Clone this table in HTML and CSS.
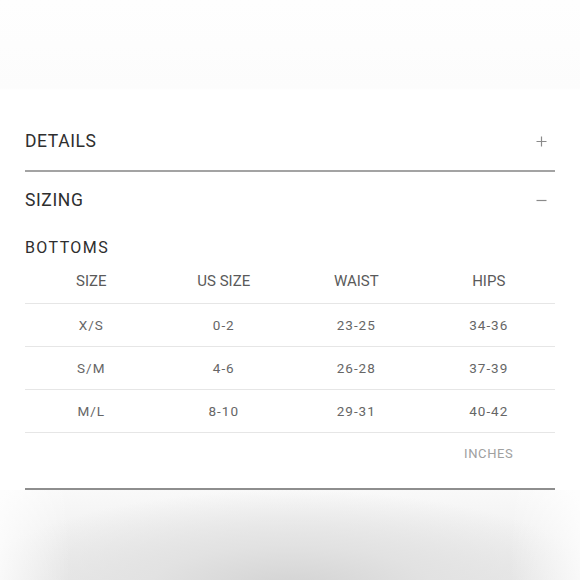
FILE: index.html
```html
<!DOCTYPE html>
<html>
<head>
<meta charset="utf-8">
<link rel="stylesheet" href="styles.css">
</head>
<body>
<div class="page">
  <div class="top"></div>
  <div class="content">
    <div class="acc-head details">
      <span class="acc-title">DETAILS</span>
      <svg class="icon" width="11" height="11" viewBox="0 0 11 11"><path d="M5.5 0.5V10.5M0.5 5.5H10.5" stroke="#8a8a8a" stroke-width="1.2" fill="none"/></svg>
    </div>
    <div class="acc-head sizing">
      <span class="acc-title">SIZING</span>
      <svg class="icon" width="11" height="11" viewBox="0 0 11 11"><path d="M0.5 5.5H10.5" stroke="#8a8a8a" stroke-width="1.2" fill="none"/></svg>
    </div>
    <div class="sub-title">BOTTOMS</div>
    <table class="size-table">
      <thead>
        <tr><th>SIZE</th><th>US SIZE</th><th>WAIST</th><th>HIPS</th></tr>
      </thead>
      <tbody>
        <tr><td>X/S</td><td>0-2</td><td>23-25</td><td>34-36</td></tr>
        <tr><td>S/M</td><td>4-6</td><td>26-28</td><td>37-39</td></tr>
        <tr><td>M/L</td><td>8-10</td><td>29-31</td><td>40-42</td></tr>
        <tr class="unit-row"><td></td><td></td><td></td><td class="unit">INCHES</td></tr>
      </tbody>
    </table>
  </div>
  <div class="bottom"></div>
</div>
</body>
</html>
```
FILE: styles.css
```css
html, body {
  margin: 0;
  padding: 0;
  background: #ffffff;
}
.page {
  width: 580px;
  height: 580px;
  overflow: hidden;
  font-family: Roboto, "Liberation Sans", sans-serif;
  display: flex;
  flex-direction: column;
  background: #ffffff;
}
.top {
  height: 112px;
  flex: none;
  background:
    linear-gradient(#fefefe 0px, #fcfcfc 88px, #ffffff 90px);
}
.content {
  padding: 0 25px;
  flex: none;
}
.acc-head {
  display: flex;
  align-items: center;
  justify-content: space-between;
  padding-right: 8px;
}
.details {
  height: 58px;
  border-bottom: 2px solid #a3a3a3;
}
.sizing {
  height: 56px;
}
.acc-title {
  font-size: 17.5px;
  color: #2e2e2e;
  letter-spacing: 0.6px;
}
.icon {
  display: block;
}
.sub-title {
  height: 38px;
  display: flex;
  align-items: center;
  font-size: 16px;
  color: #2e2e2e;
  letter-spacing: 1.4px;
}
.size-table {
  width: 100%;
  border-collapse: collapse;
  table-layout: fixed;
}
.size-table th {
  height: 30px;
  padding: 0 0 7px 0;
  font-weight: 400;
  font-size: 15px;
  color: #5a5a5a;
  text-align: center;
  vertical-align: middle;
}
.size-table td {
  height: 42px;
  padding: 0;
  border-top: 1px solid #e6e6e6;
  font-size: 13.5px;
  color: #666666;
  letter-spacing: 1px;
  text-align: center;
  vertical-align: middle;
}
.size-table .unit-row td {
  height: 42px;
  vertical-align: top;
  padding-top: 13px;
  border-bottom: 2px solid #8e8e8e;
}
.size-table td.unit {
  color: #a0a0a0;
  font-size: 13px;
  letter-spacing: 0.6px;
}
.bottom {
  flex: 1;
  background:
    linear-gradient(90deg, rgba(255,255,255,0.75) 0px, rgba(255,255,255,0) 70px, rgba(255,255,255,0) 510px, rgba(255,255,255,0.75) 580px),
    radial-gradient(ellipse 320px 100px at 290px 100px, #d2d2d2 0%, #e2e2e2 45%, rgba(245,245,245,0) 100%),
    linear-gradient(#f9f9f9, #e9e9e9);
}
```
